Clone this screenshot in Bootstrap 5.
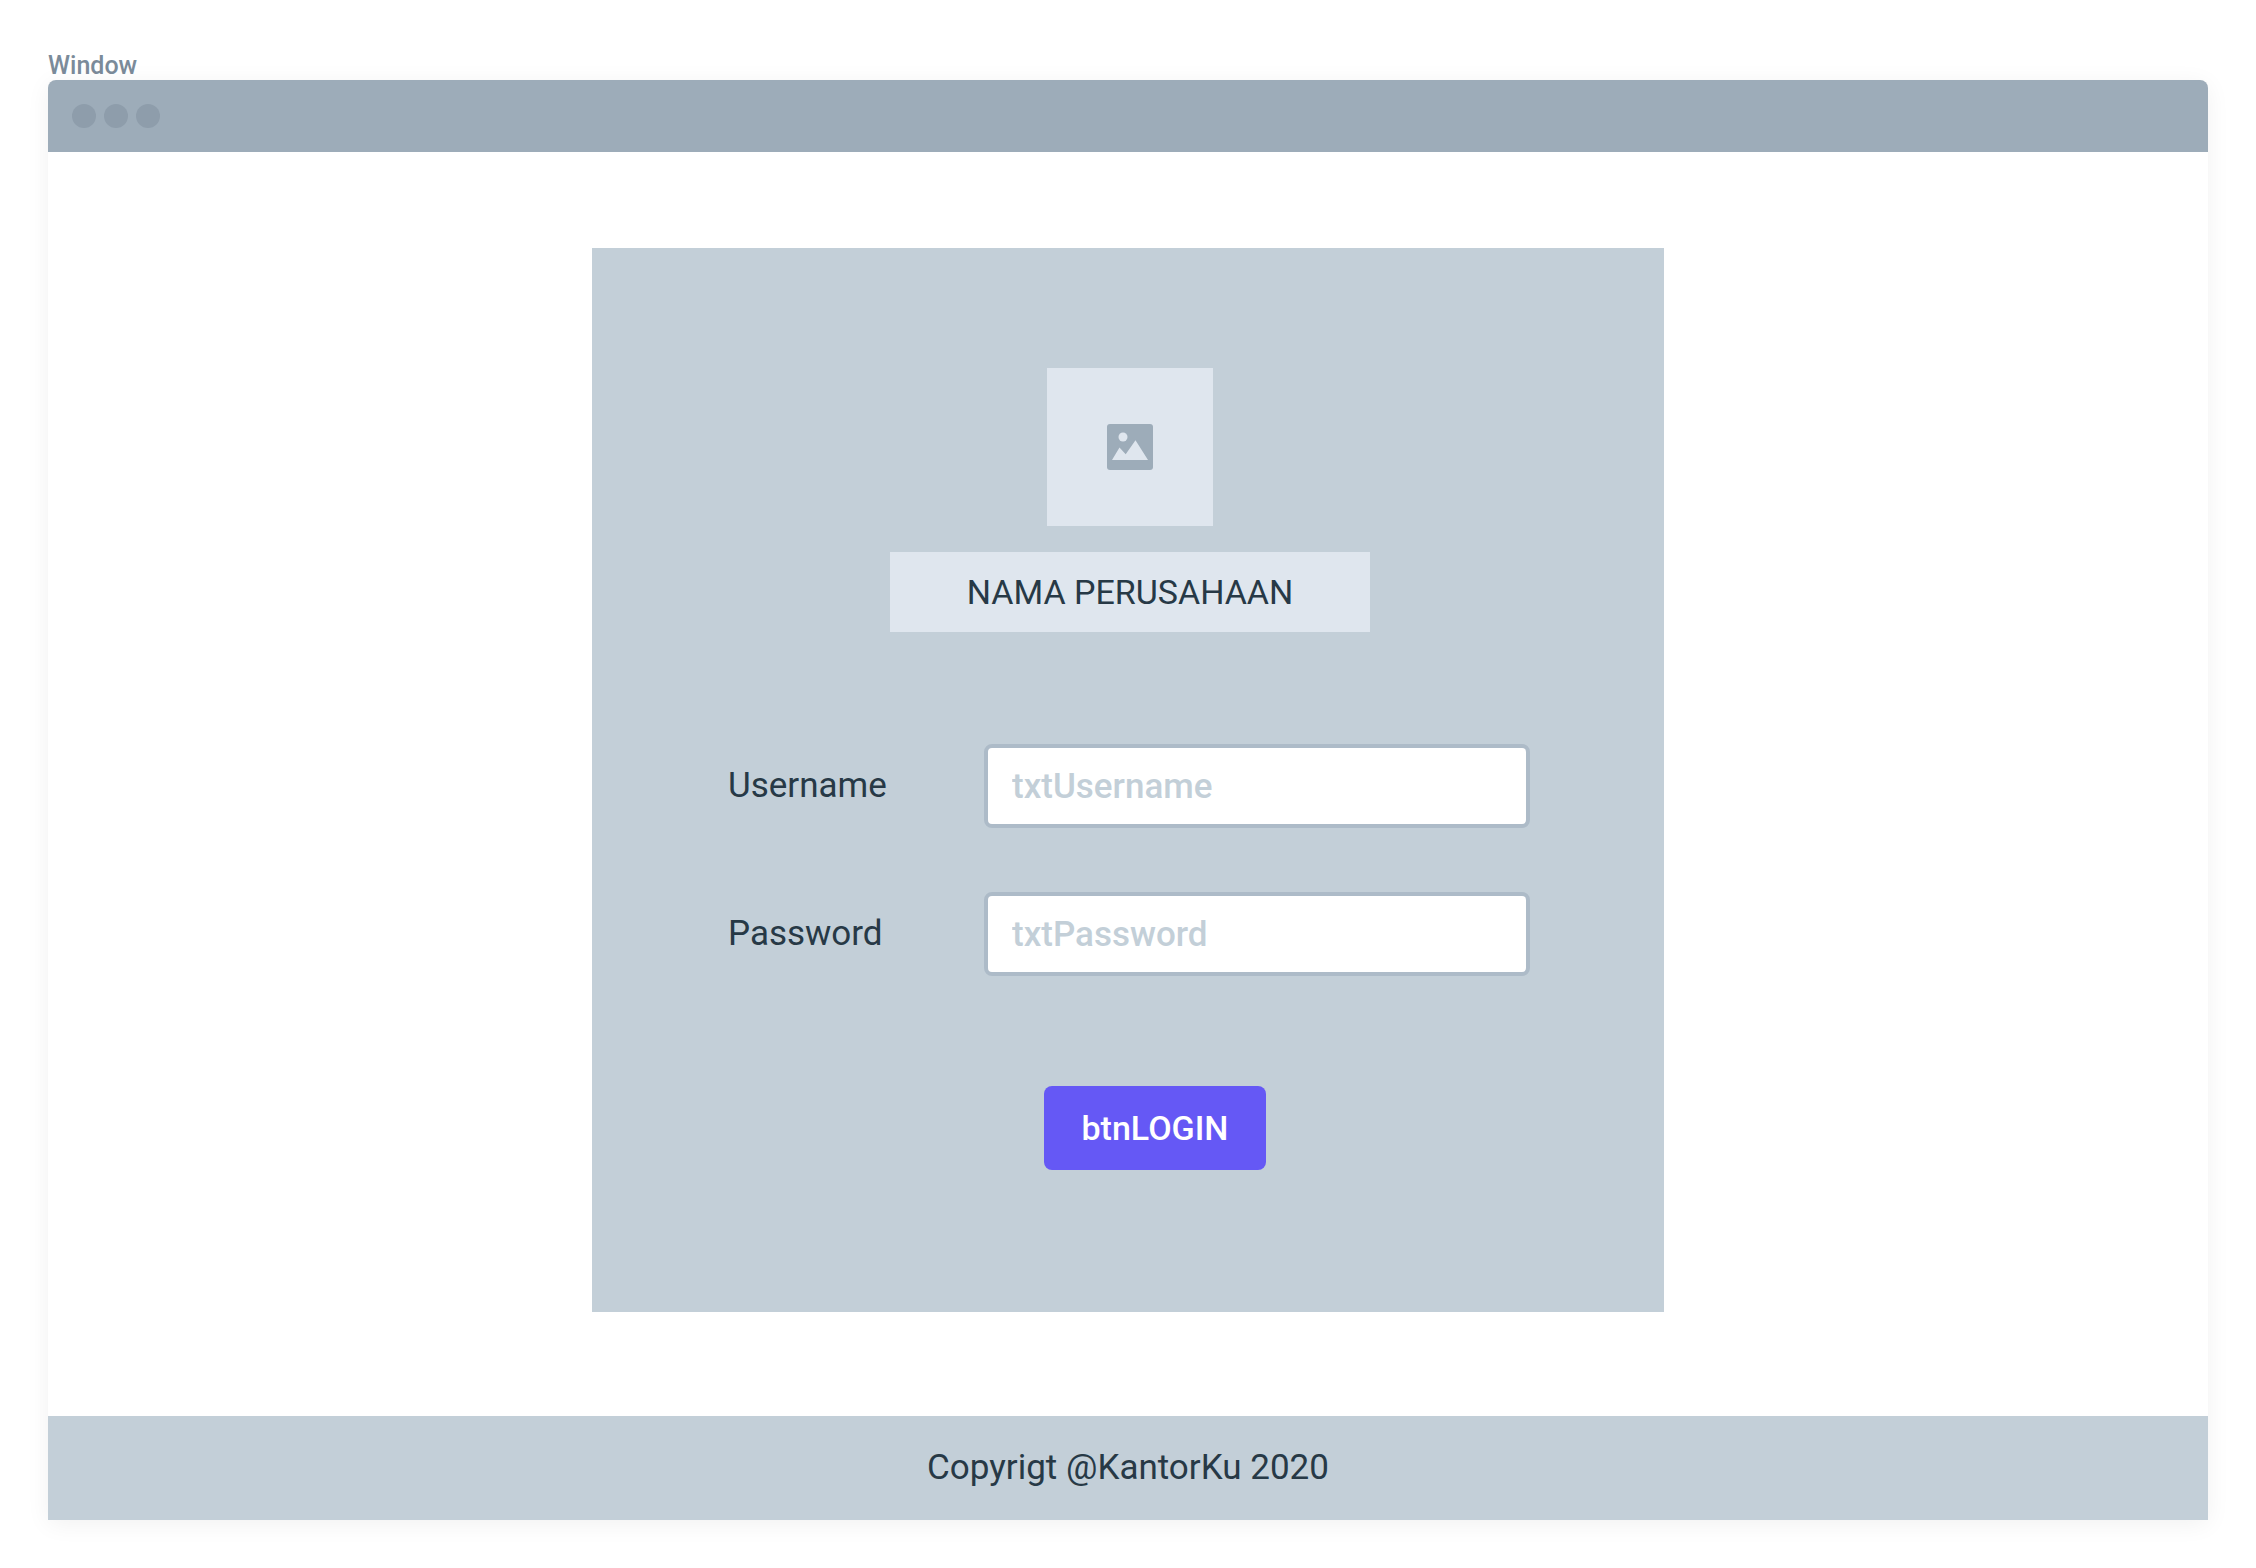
<!DOCTYPE html>
<html lang="id">
<head>
<meta charset="utf-8">
<meta name="viewport" content="width=device-width, initial-scale=1">
<title>Login</title>
<link href="https://cdn.jsdelivr.net/npm/bootstrap@5.3.0/dist/css/bootstrap.min.css" rel="stylesheet">
<style>
  :root { --ink: #273946; --panel: #c3cfd8; --soft: #dfe6ee; --steel: #9dacb9; }
  body { font-family: Roboto, "Liberation Sans", sans-serif; font-size: 35px; line-height: 44px; color: var(--ink); background: #fff; }
  .page { min-height: 100vh; padding: 52px 48px 48px; }
  .window-label { font-size: 25px; line-height: 28px; font-weight: 500; color: #7b8b9a; }
  .window-frame { background: #fff; border-radius: 8px 8px 0 0; box-shadow: 0 4px 24px rgba(0, 0, 0, .06); }
  .title-bar { height: 72px; padding: 0 24px; gap: 8px; background: var(--steel); border-radius: 8px 8px 0 0; }
  .dot { width: 24px; height: 24px; background: #8e9dab; }
  .stage { padding: 96px 24px 104px; }
  .login-panel { width: 100%; max-width: 1072px; padding: 120px 134px 142px 136px; background: var(--panel); }
  .brand { gap: 26px; padding-left: 2px; margin-bottom: 112px; }
  .logo-box { width: 166px; height: 158px; background: var(--soft); }
  .company { width: 100%; max-width: 480px; min-height: 80px; background: var(--soft); font-size: 34px; }
  .field-row { margin-bottom: 64px; }
  .field-row label { width: 256px; }
  .field-row .form-control { min-width: 0; height: 84px; padding: 0 24px; border: 4px solid #adbbc8; border-radius: 8px; font-size: 35px; font-weight: 500; color: var(--ink); background: #fff; }
  .field-row .form-control::placeholder { color: var(--panel); opacity: 1; }
  .actions { padding: 46px 0 0 316px; }
  .btn-login { width: 222px; height: 84px; padding: 0; border: 0; border-radius: 8px; font-size: 34px; font-weight: 500; color: #fff; background: #6558f5; }
  .btn-login:hover { color: #fff; background: #5548e0; }
  .copyright { min-height: 104px; background: var(--panel); }
</style>
</head>
<body>
<div class="page d-flex flex-column">
  <div class="window-label">Window</div>
  <div class="window-frame flex-grow-1 d-flex flex-column">
    <header class="title-bar d-flex align-items-center">
      <span class="dot rounded-circle"></span>
      <span class="dot rounded-circle"></span>
      <span class="dot rounded-circle"></span>
    </header>
    <main class="stage flex-grow-1 d-flex justify-content-center align-items-start">
      <form class="login-panel">
        <div class="brand d-flex flex-column align-items-center">
          <div class="logo-box d-flex align-items-center justify-content-center">
            <svg width="46" height="46" viewBox="0 0 46 46" role="img" aria-label="Logo">
              <rect width="46" height="46" rx="3" fill="#9dacb9"/>
              <circle cx="16" cy="13" r="4.5" fill="#dfe6ee"/>
              <path d="M5 36 12.5 23.5 18.7 30.3 28.5 16.3 41 36Z" fill="#dfe6ee"/>
            </svg>
          </div>
          <div class="company d-flex align-items-center justify-content-center">NAMA PERUSAHAAN</div>
        </div>
        <div class="field-row d-flex align-items-center">
          <label class="flex-shrink-0" for="txtUsername">Username</label>
          <input class="form-control" type="text" id="txtUsername" placeholder="txtUsername">
        </div>
        <div class="field-row d-flex align-items-center">
          <label class="flex-shrink-0" for="txtPassword">Password</label>
          <input class="form-control" type="password" id="txtPassword" placeholder="txtPassword">
        </div>
        <div class="actions">
          <button class="btn btn-login" type="button">btnLOGIN</button>
        </div>
      </form>
    </main>
    <footer class="copyright d-flex align-items-center justify-content-center">Copyrigt @KantorKu 2020</footer>
  </div>
</div>
<script src="https://cdn.jsdelivr.net/npm/bootstrap@5.3.0/dist/js/bootstrap.bundle.min.js"></script>
</body>
</html>
